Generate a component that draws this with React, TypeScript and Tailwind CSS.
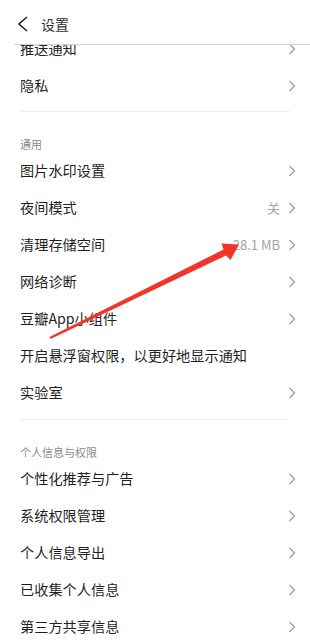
import React from "react";

type Row = { label: string; value?: string; arrow?: boolean };

const topRows: Row[] = [
  { label: "推送通知", arrow: true },
  { label: "隐私", arrow: true },
];

const generalRows: Row[] = [
  { label: "图片水印设置", arrow: true },
  { label: "夜间模式", value: "关", arrow: true },
  { label: "清理存储空间", value: "28.1 MB", arrow: true },
  { label: "网络诊断", arrow: true },
  { label: "豆瓣App小组件", arrow: true },
  { label: "开启悬浮窗权限，以更好地显示通知", arrow: false },
  { label: "实验室", arrow: true },
];

const privacyRows: Row[] = [
  { label: "个性化推荐与广告", arrow: true },
  { label: "系统权限管理", arrow: true },
  { label: "个人信息导出", arrow: true },
  { label: "已收集个人信息", arrow: true },
  { label: "第三方共享信息", arrow: true },
];

function Chevron() {
  return (
    <svg width="8" height="12" viewBox="0 0 8 12" className="shrink-0">
      <polyline points="1.5,1 6.5,6 1.5,11" fill="none" stroke="#9a9a9a" strokeWidth="1.2" />
    </svg>
  );
}

function SettingRow({ row }: { row: Row }) {
  return (
    <div className="flex h-[37px] items-center pl-[20px] pr-[14px]">
      <span className="flex-1 text-[14.2px] text-[#1f1f1f]">{row.label}</span>
      {row.value && <span className="mr-[8px] text-[13px] text-[#a3a3a3]">{row.value}</span>}
      {row.arrow && <Chevron />}
    </div>
  );
}

function Section({ title, rows }: { title: string; rows: Row[] }) {
  return (
    <div>
      <div className="mx-[20px] h-px bg-[#f0f0f0]" />
      <div className="pl-[20px] pt-[24px] text-[11px] leading-[16px] text-[#8a8a8a]">{title}</div>
      {rows.map((r) => (
        <SettingRow key={r.label} row={r} />
      ))}
    </div>
  );
}

export default function App() {
  return (
    <div
      className="relative h-[644px] w-[310px] overflow-hidden bg-white"
      style={{ fontFamily: '"Noto Sans CJK SC", "Noto Sans", sans-serif' }}
    >
      <div className="flex h-[44px] items-center bg-white pt-[4px]">
        <svg width="14" height="18" viewBox="0 0 14 18" className="ml-[16px]">
          <polyline points="11,2 3,9 11,16" fill="none" stroke="#222" strokeWidth="1.6" />
        </svg>
        <span className="ml-[11px] text-[14px] text-[#333]">设置</span>
      </div>
      <div className="ml-[14px] h-px bg-[#d4d4d4]" />
      <div className="h-[599px] overflow-hidden">
        <div className="-mt-[15px]">
          {topRows.map((r) => (
            <SettingRow key={r.label} row={r} />
          ))}
          <div className="mt-[7px]">
            <Section title="通用" rows={generalRows} />
          </div>
          <div className="mt-[8px]">
            <Section title="个人信息与权限" rows={privacyRows} />
          </div>
        </div>
      </div>
      <svg className="pointer-events-none absolute left-0 top-0" width="310" height="644">
        <polygon
          points="50.5,339 226,255.5 230.5,260 239,244.5 221.5,243.5 223.5,249.5 49.5,337"
          fill="#f2352a"
        />
      </svg>
    </div>
  );
}
